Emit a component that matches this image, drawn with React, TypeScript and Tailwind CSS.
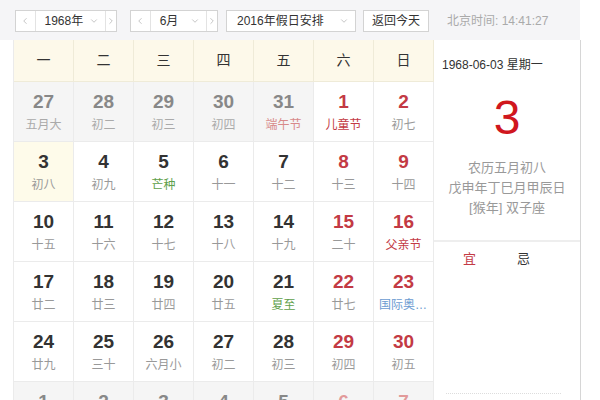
import React from 'react';
import { ChevronLeft, ChevronRight, ChevronDown } from 'lucide-react';

type Day = { n: number; l: string; kind: 'prev' | 'cur' | 'next'; tone?: 'red' | 'green' | 'blue' | 'pink'; sel?: boolean };

const weeks: Day[][] = [
  [
    { n: 27, l: '五月大', kind: 'prev' },
    { n: 28, l: '初二', kind: 'prev' },
    { n: 29, l: '初三', kind: 'prev' },
    { n: 30, l: '初四', kind: 'prev' },
    { n: 31, l: '端午节', kind: 'prev', tone: 'pink' },
    { n: 1, l: '儿童节', kind: 'cur', tone: 'red' },
    { n: 2, l: '初七', kind: 'cur' },
  ],
  [
    { n: 3, l: '初八', kind: 'cur', sel: true },
    { n: 4, l: '初九', kind: 'cur' },
    { n: 5, l: '芒种', kind: 'cur', tone: 'green' },
    { n: 6, l: '十一', kind: 'cur' },
    { n: 7, l: '十二', kind: 'cur' },
    { n: 8, l: '十三', kind: 'cur' },
    { n: 9, l: '十四', kind: 'cur' },
  ],
  [
    { n: 10, l: '十五', kind: 'cur' },
    { n: 11, l: '十六', kind: 'cur' },
    { n: 12, l: '十七', kind: 'cur' },
    { n: 13, l: '十八', kind: 'cur' },
    { n: 14, l: '十九', kind: 'cur' },
    { n: 15, l: '二十', kind: 'cur' },
    { n: 16, l: '父亲节', kind: 'cur', tone: 'red' },
  ],
  [
    { n: 17, l: '廿二', kind: 'cur' },
    { n: 18, l: '廿三', kind: 'cur' },
    { n: 19, l: '廿四', kind: 'cur' },
    { n: 20, l: '廿五', kind: 'cur' },
    { n: 21, l: '夏至', kind: 'cur', tone: 'green' },
    { n: 22, l: '廿七', kind: 'cur' },
    { n: 23, l: '国际奥林匹克日', kind: 'cur', tone: 'blue' },
  ],
  [
    { n: 24, l: '廿九', kind: 'cur' },
    { n: 25, l: '三十', kind: 'cur' },
    { n: 26, l: '六月小', kind: 'cur' },
    { n: 27, l: '初二', kind: 'cur' },
    { n: 28, l: '初三', kind: 'cur' },
    { n: 29, l: '初四', kind: 'cur' },
    { n: 30, l: '初五', kind: 'cur' },
  ],
  [
    { n: 1, l: '初六', kind: 'next' },
    { n: 2, l: '初七', kind: 'next' },
    { n: 3, l: '初八', kind: 'next' },
    { n: 4, l: '初九', kind: 'next' },
    { n: 5, l: '初十', kind: 'next' },
    { n: 6, l: '十一', kind: 'next' },
    { n: 7, l: '小暑', kind: 'next' },
  ],
];

const heads = ['一', '二', '三', '四', '五', '六', '日'];

const lunarTone: Record<string, string> = {
  red: 'text-[#c33a44]',
  green: 'text-[#5fa04a]',
  blue: 'text-[#6b9bd1]',
  pink: 'text-[#d88a8a]',
};

const DayCell: React.FC<{ d: Day; weekend: boolean }> = ({ d, weekend }) => {
  const out = d.kind !== 'cur';
  const bg = out ? 'bg-[#f5f5f5]' : d.sel ? 'bg-[#fefbea]' : 'bg-white';
  const num = out
    ? weekend ? 'text-[#e29a9a]' : 'text-[#888]'
    : weekend ? 'text-[#c33a44]' : 'text-[#333]';
  const lunar = d.tone ? lunarTone[d.tone] : out ? 'text-[#aaa]' : 'text-[#999]';
  return (
    <div className={`h-[60px] border-r border-b border-[#ebebeb] flex flex-col items-center pt-[9px] ${bg}`}>
      <div className={`text-[19px] font-bold leading-[22px] ${num}`}>{d.n}</div>
      <div className={`text-[12px] leading-[16px] mt-[4px] px-[5px] max-w-full truncate ${lunar}`}>{d.l}</div>
    </div>
  );
};

const Stepper: React.FC<{ label: string; w: string; mid: string }> = ({ label, w, mid }) => (
  <div className={`flex h-[22px] ${w} border border-[#d3d3d3] bg-white text-[12px] text-[#333]`}>
    <div className="w-[20px] flex items-center justify-center border-r border-[#e3e3e3]">
      <ChevronLeft size={10} color="#bbb" />
    </div>
    <div className={`${mid} flex items-center justify-between pl-[9px] pr-[6px] border-r border-[#e3e3e3]`}>
      <span>{label}</span>
      <ChevronDown size={10} color="#bbb" />
    </div>
    <div className="flex-1 flex items-center justify-center">
      <ChevronRight size={10} color="#bbb" />
    </div>
  </div>
);

const App: React.FC = () => {
  return (
    <div className="w-[600px] h-[400px] overflow-hidden bg-white" style={{ fontFamily: '"Liberation Sans", "Noto Sans CJK SC", sans-serif' }}>
      <div className="w-[580px] h-[40px] bg-[#f5f5f7] flex items-center pl-[15px] pt-[1px]">
        <Stepper label="1968年" w="w-[102px]" mid="w-[72px]" />
        <div className="ml-[13px]">
          <Stepper label="6月" w="w-[88px]" mid="w-[57px]" />
        </div>
        <div className="ml-[8px] w-[130px] h-[22px] border border-[#d3d3d3] bg-white flex items-center justify-between pl-[10px] pr-[6px] text-[12px] text-[#333]">
          <span>2016年假日安排</span>
          <ChevronDown size={10} color="#bbb" />
        </div>
        <div className="ml-[7px] w-[66px] h-[22px] border border-[#d3d3d3] bg-white flex items-center justify-center text-[12px] text-[#333]">
          返回今天
        </div>
        <div className="ml-[18px] text-[12px] text-[#aaa]">北京时间: 14:41:27</div>
      </div>

      <div className="flex pl-[13px]">
        <div className="grid grid-cols-[repeat(7,60px)] border-l border-[#ebebeb]">
          {heads.map((h) => (
            <div key={h} className="h-[42px] bg-[#fdf9ea] border-r border-b border-[#efebd8] flex items-center justify-center text-[14px] text-[#333]">
              {h}
            </div>
          ))}
          {weeks.map((w, i) =>
            w.map((d, j) => <DayCell key={`${i}-${j}`} d={d} weekend={j >= 5} />)
          )}
        </div>

        <div className="w-[147px] border-r border-[#d6d6d6] bg-white flex flex-col">
          <div className="h-[200px] flex flex-col">
            <div className="mt-[15px] pl-[8px] h-[20px] leading-[20px] text-[12px] text-[#333]">1968-06-03 星期一</div>
            <div className="mt-[19px] h-[48px] text-center text-[48px] leading-[48px] text-[#d0171e]">3</div>
            <div className="mt-[16px] text-center text-[13px] leading-[20px] text-[#999]">
              <div>农历五月初八</div>
              <div>戊申年丁巳月甲辰日</div>
              <div>[猴年] 双子座</div>
            </div>
          </div>
          <div className="border-t-2 border-[#eeeeee] flex-1">
            <div className="mt-[7px] h-[20px] flex items-center pl-[29px] text-[13px]">
              <span className="text-[#c33a44]">宜</span>
              <span className="ml-[41px] text-[#333]">忌</span>
            </div>
            <div className="mt-[124px] ml-[12px] w-[115px] border-t border-dotted border-[#dddddd]" />
          </div>
        </div>
      </div>
    </div>
  );
};

export default App;
